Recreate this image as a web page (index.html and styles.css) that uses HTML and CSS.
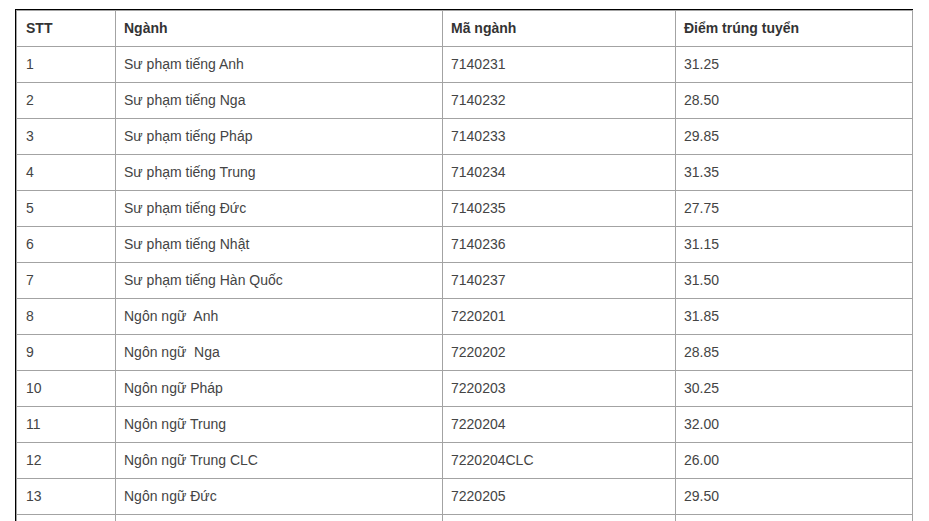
FILE: index.html
```html
<!DOCTYPE html>
<html lang="vi">
<head>
<meta charset="utf-8">
<title>Điểm trúng tuyển</title>
<link rel="stylesheet" href="styles.css">
</head>
<body>
<div class="frame">
<table class="scores">
<colgroup>
<col class="c-stt"><col class="c-name"><col class="c-code"><col class="c-score">
</colgroup>
<thead>
<tr><th>STT</th><th>Ngành</th><th>Mã ngành</th><th>Điểm trúng tuyển</th></tr>
</thead>
<tbody>
<tr><td>1</td><td>Sư phạm tiếng Anh</td><td>7140231</td><td>31.25</td></tr>
<tr><td>2</td><td>Sư phạm tiếng Nga</td><td>7140232</td><td>28.50</td></tr>
<tr><td>3</td><td>Sư phạm tiếng Pháp</td><td>7140233</td><td>29.85</td></tr>
<tr><td>4</td><td>Sư phạm tiếng Trung</td><td>7140234</td><td>31.35</td></tr>
<tr><td>5</td><td>Sư phạm tiếng Đức</td><td>7140235</td><td>27.75</td></tr>
<tr><td>6</td><td>Sư phạm tiếng Nhật</td><td>7140236</td><td>31.15</td></tr>
<tr><td>7</td><td>Sư phạm tiếng Hàn Quốc</td><td>7140237</td><td>31.50</td></tr>
<tr><td>8</td><td>Ngôn ngữ&nbsp; Anh</td><td>7220201</td><td>31.85</td></tr>
<tr><td>9</td><td>Ngôn ngữ&nbsp; Nga</td><td>7220202</td><td>28.85</td></tr>
<tr><td>10</td><td>Ngôn ngữ Pháp</td><td>7220203</td><td>30.25</td></tr>
<tr><td>11</td><td>Ngôn ngữ Trung</td><td>7220204</td><td>32.00</td></tr>
<tr><td>12</td><td>Ngôn ngữ Trung CLC</td><td>7220204CLC</td><td>26.00</td></tr>
<tr><td>13</td><td>Ngôn ngữ Đức</td><td>7220205</td><td>29.50</td></tr>
<tr><td></td><td></td><td></td><td></td></tr>
</tbody>
</table>
</div>
</body>
</html>
```
FILE: styles.css
```css
html, body {
  margin: 0;
  padding: 0;
  background: #fff;
}
body {
  font-family: "Liberation Sans", Arial, sans-serif;
  padding: 9px 0 0 15px;
}
.frame {
  width: 896px;
  border: 1px solid #000;
  border-bottom: none;
}
.scores {
  width: 896px;
  border-collapse: collapse;
  table-layout: fixed;
}
.c-stt { width: 99px; }
.c-name { width: 327px; }
.c-code { width: 233px; }
.c-score { width: 237px; }
.scores th,
.scores td {
  border: 1px solid #a3a3a3;
  padding: 0 8px 1px 8px;
  text-align: left;
  vertical-align: middle;
  box-sizing: border-box;
  height: 36px;
}
.scores th:first-child,
.scores td:first-child {
  padding-left: 9px;
}
.scores th {
  font-size: 14px;
  font-weight: bold;
  color: #333;
}
.scores td {
  font-size: 14px;
  color: #444;
}
```
